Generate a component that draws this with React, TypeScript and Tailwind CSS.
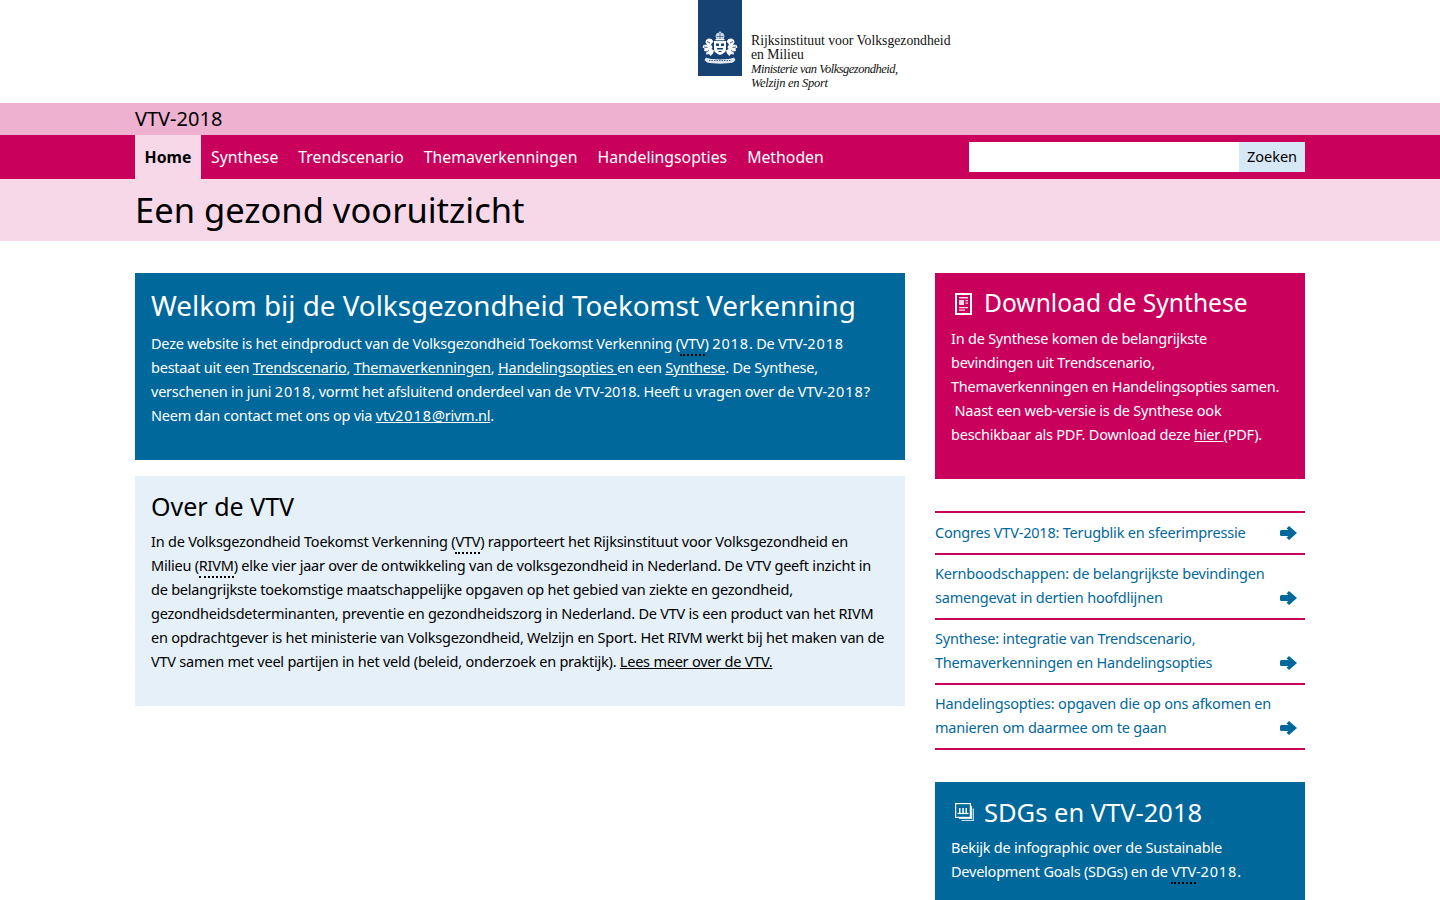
const font = "[font-family:'Noto_Sans',sans-serif]";

const navItems = ["Synthese", "Trendscenario", "Themaverkenningen", "Handelingsopties", "Methoden"];

const links = [
  { lines: ["Congres VTV-2018: Terugblik en sfeerimpressie"] },
  { lines: ["Kernboodschappen: de belangrijkste bevindingen", "samengevat in dertien hoofdlijnen"] },
  { lines: ["Synthese: integratie van Trendscenario,", "Themaverkenningen en Handelingsopties"] },
  { lines: ["Handelingsopties: opgaven die op ons afkomen en", "manieren om daarmee om te gaan"] },
];

function Emblem() {
  return (
    <svg viewBox="0 0 44 76" className="w-[44px] h-[76px] shrink-0" fill="none">
      <rect width="44" height="76" fill="#154273" />
      {/* crown */}
      <path d="M22 31l1 1.500 2.500 1 1 2.500-.8 3h-7.400l-.8-3 1-2.500 2.500-1z" fill="#c9d5e3" />
      <path d="M18.500 36.500h7M22 33v6" stroke="#154273" strokeWidth=".6" />
      <rect x="17.500" y="39" width="9" height="1.300" fill="#fff" />
      {/* shield */}
      <path d="M16 41h12v8.500c0 3-3.500 4.500-6 5.500-2.500-1-6-2.500-6-5.500z" fill="#fff" />
      <path d="M18 43.500h3v2.500h-3zM23 43.500h3v2.500h-3zM19 48h6v1.500h-6zM20.500 51h3v1h-3z" fill="#154273" />
      {/* lions */}
      <path d="M15.500 41.500l-2-2.500-3-.5-2.500 1.500-.5 2.500 1.500 2-3.500.5-1 2.500 2 1-.5 2.500 2.500.5-.5 3 3-.5 1.500 2 2.500-2.500 1-3-2.500-1.500 1-2-1.500-2.500z" fill="#fff" />
      <path d="M28.500 41.500l2-2.500 3-.5 2.500 1.500.5 2.500-1.500 2 3.500.5 1 2.500-2 1 .5 2.500-2.500.5.5 3-3-.5-1.500 2-2.500-2.500-1-3 2.500-1.500-1-2 1.500-2.500z" fill="#fff" />
      <path d="M9 41.500l3 1.500M6 47l3.500.5M8 52l3-1.500M35 41.500l-3 1.500M38 47l-3.500.5M36 52l-3-1.500" stroke="#154273" strokeWidth=".8" />
      {/* ribbon */}
      <path d="M8 57.500c5 2.500 23 2.500 28 0l1.500 2.500-2.500 2.500c-6 1.500-20 1.500-26 0L6.500 60z" fill="#dfe6ee" />
      <path d="M11 60.500h22" stroke="#154273" strokeWidth=".8" strokeDasharray="1.500 1" />
    </svg>
  );
}

function NewsIcon() {
  return (
    <svg viewBox="0 0 17 22" className="w-[17px] h-[22px] shrink-0 mt-[1px]">
      <path fillRule="evenodd" d="M0 0h17v22H0zM2 2v18h13V2z" fill="#fff" />
      <path d="M4 4h9v1.500H4zM4 7h5v5H4zM10.500 7H13v1.200h-2.500zM10.500 9.500H13v1.200h-2.500zM4 14h9v1.200H4zM4 16.500h6v1.200H4z" fill="#fff" opacity=".85" />
    </svg>
  );
}

function StackIcon() {
  return (
    <svg viewBox="0 0 19 19" className="w-[19px] h-[19px] shrink-0 mt-[1px]" fill="none" stroke="#fff">
      <rect x=".6" y=".6" width="14.800" height="13.800" strokeWidth="1.200" />
      <path d="M16.500 3v12.500H4" strokeWidth="1.200" opacity=".85" />
      <path d="M18.300 5.500V17.500H6.500" strokeWidth="1.200" opacity=".8" />
      <path d="M2.500 10.500h11" strokeWidth="1.200" />
      <path d="M4 5h1.500v5H4zM7.300 5h1.500v5H7.300zM10.500 5H12v5h-1.500z" fill="#fff" stroke="none" />
    </svg>
  );
}

function ArrowIcon() {
  return (
    <svg viewBox="0 0 17 14" className="w-[17px] h-[14px] shrink-0">
      <path d="M9 0l8 7-8 7-2.500-2.500L8.500 10h-7A1.500 1.500 0 0 1 0 8.500v-3A1.500 1.500 0 0 1 1.500 4h7L6.500 2.500z" fill="#01689b" />
    </svg>
  );
}

function Abbr({ children }: { children: string }) {
  return <span className="border-b-2 border-dotted border-black leading-none pb-px">{children}</span>;
}

// digits run wider in the original face
function Num({ children }: { children: string }) {
  return <span className="tracking-[0.9px]">{children}</span>;
}

const body = "text-[14.500px] tracking-[-0.23px] leading-[24px] whitespace-nowrap";

export default function App() {
  return (
    <div className={`h-[900px] overflow-hidden bg-white text-black ${font}`}>
      <header className="h-[103px] flex pl-[698px]">
        <Emblem />
        <div className="ml-[9px] pt-[34px] text-[#111] [font-family:'Liberation_Serif',serif]">
          <div className="text-[13.700px] leading-[13.500px] whitespace-nowrap">Rijksinstituut voor Volksgezondheid</div>
          <div className="text-[13.700px] leading-[14px]">en Milieu</div>
          <div className="text-[12.500px] leading-[14px] italic whitespace-nowrap tracking-[-0.5px]">Ministerie van Volksgezondheid,</div>
          <div className="text-[12.500px] leading-[14px] italic tracking-[-0.3px]">Welzijn en Sport</div>
        </div>
      </header>

      <div className="h-[32px] bg-[#eeb1cf] px-[135px] text-[20px] leading-[32px]">VTV-2018</div>

      <nav className="h-[44px] bg-[#ca005d] px-[135px] flex justify-between">
        <ul className="flex text-[15.800px] leading-[44px] text-white">
          <li className="w-[66px] text-center bg-[#f7d8e8] text-black font-bold">Home</li>
          {navItems.map((item) => (
            <li key={item} className="px-[10px]">{item}</li>
          ))}
        </ul>
        <form className="flex py-[7px]">
          <input className="w-[270px] h-[30px] bg-white" aria-label="Zoeken" />
          <button type="button" className="w-[66px] h-[30px] bg-[#d6e7f5] text-[14.500px] text-black">Zoeken</button>
        </form>
      </nav>

      <div className="h-[62px] bg-[#f7d8e8] px-[135px] text-[34.500px] leading-[62px]">Een gezond vooruitzicht</div>

      <main className="px-[135px] pt-[32px] flex gap-[30px] items-start">
        <div className="w-[770px] flex flex-col gap-[16px] shrink-0">
          <section className="h-[187px] bg-[#01689b] text-white px-[16px] pt-[12px]">
            <h1 className="text-[27.800px] leading-[40px] whitespace-nowrap">Welkom bij de Volksgezondheid Toekomst Verkenning</h1>
            <p className={`mt-[6px] ${body}`}>
              Deze website is het eindproduct van de Volksgezondheid Toekomst Verkenning (<Abbr>VTV</Abbr>) <Num>2018</Num>. De VTV-<Num>2018</Num><br />
              bestaat uit een <u>Trendscenario</u>, <u>Themaverkenningen</u>, <u>Handelingsopties </u>en een <u>Synthese</u>. De Synthese,<br />
              verschenen in juni <Num>2018</Num>, vormt het afsluitend onderdeel van de VTV-2018. Heeft u vragen over de VTV-<Num>2018</Num>?<br />
              Neem dan contact met ons op via <u>vtv<Num>2018</Num>@rivm.nl</u>.
            </p>
          </section>
          <section className="h-[230px] bg-[#e5f0f9] px-[16px] pt-[12px]">
            <h2 className="text-[25px] leading-[36px]">Over de VTV</h2>
            <p className={`mt-[5px] ${body}`}>
              In de Volksgezondheid Toekomst Verkenning (<Abbr>VTV</Abbr>) rapporteert het Rijksinstituut voor Volksgezondheid en<br />
              Milieu (<Abbr>RIVM</Abbr>) elke vier jaar over de ontwikkeling van de volksgezondheid in Nederland. De VTV geeft inzicht in<br />
              de belangrijkste toekomstige maatschappelijke opgaven op het gebied van ziekte en gezondheid,<br />
              gezondheidsdeterminanten, preventie en gezondheidszorg in Nederland. De VTV is een product van het RIVM<br />
              en opdrachtgever is het ministerie van Volksgezondheid, Welzijn en Sport. Het RIVM werkt bij het maken van de<br />
              VTV samen met veel partijen in het veld (beleid, onderzoek en praktijk). <u>Lees meer over de VTV.</u>
            </p>
          </section>
        </div>

        <aside className="w-[370px] shrink-0">
          <section className="h-[206px] bg-[#ca005d] text-white px-[16px] pt-[12px]">
            <div className="flex items-center gap-[12px] pl-[4px]">
              <NewsIcon />
              <h2 className="text-[24.600px] leading-[36px]">Download de Synthese</h2>
            </div>
            <p className={`mt-[5px] ${body}`}>
              In de Synthese komen de belangrijkste<br />
              bevindingen uit Trendscenario,<br />
              Themaverkenningen en Handelingsopties samen.<br />
              &nbsp;Naast een web-versie is de Synthese ook<br />
              beschikbaar als PDF. Download deze <u>hier </u>(PDF).
            </p>
          </section>

          <ul className="mt-[32px] border-t-2 border-[#ca005d] text-[14.500px] tracking-[-0.2px] leading-[24px] text-[#01689b]">
            {links.map((link) => (
              <li
                key={link.lines[0]}
                className={`border-b-2 border-[#ca005d] flex justify-between items-end pb-[9px] ${link.lines.length > 1 ? "pt-[6px]" : "pt-[7px]"}`}
              >
                <div className="whitespace-nowrap">
                  {link.lines.map((line) => (
                    <div key={line}>{line}</div>
                  ))}
                </div>
                <span className="pr-[8px] pb-[4px]"><ArrowIcon /></span>
              </li>
            ))}
          </ul>

          <section className="mt-[32px] h-[150px] bg-[#01689b] text-white px-[16px] pt-[12px]">
            <div className="flex items-center gap-[10px] pl-[4px]">
              <StackIcon />
              <h2 className="text-[25.500px] leading-[36px]">SDGs en VTV-2018</h2>
            </div>
            <p className={`mt-[5px] ${body}`}>
              Bekijk de infographic over de Sustainable<br />
              Development Goals (SDGs) en de <Abbr>VTV</Abbr>-<Num>2018</Num>.
            </p>
          </section>
        </aside>
      </main>
    </div>
  );
}
